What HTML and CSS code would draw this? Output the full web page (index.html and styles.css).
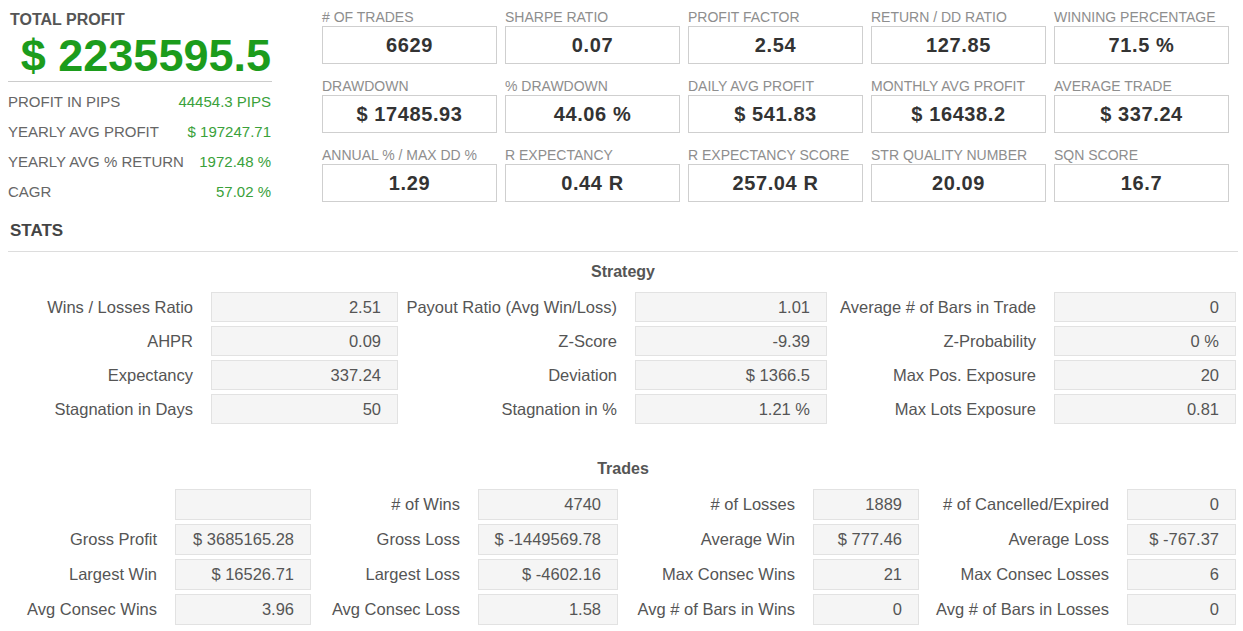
FILE: index.html
```html
<!DOCTYPE html>
<html>
<head>
<meta charset="utf-8">
<link rel="stylesheet" href="styles.css">
</head>
<body>
<div class="page">
  <div class="top">
    <div class="summary">
      <div class="total-title">TOTAL PROFIT</div>
      <div class="total-value">$ 2235595.5</div>
      <div class="sum-rows">
        <div class="sum-row"><span class="sum-label">PROFIT IN PIPS</span><span class="sum-val">44454.3 PIPS</span></div>
        <div class="sum-row"><span class="sum-label">YEARLY AVG PROFIT</span><span class="sum-val">$ 197247.71</span></div>
        <div class="sum-row"><span class="sum-label">YEARLY AVG % RETURN</span><span class="sum-val">1972.48 %</span></div>
        <div class="sum-row"><span class="sum-label">CAGR</span><span class="sum-val">57.02 %</span></div>
      </div>
    </div>
    <div class="metrics">
      <div class="metric"><div class="m-label"># OF TRADES</div><div class="m-box">6629</div></div>
      <div class="metric"><div class="m-label">SHARPE RATIO</div><div class="m-box">0.07</div></div>
      <div class="metric"><div class="m-label">PROFIT FACTOR</div><div class="m-box">2.54</div></div>
      <div class="metric"><div class="m-label">RETURN / DD RATIO</div><div class="m-box">127.85</div></div>
      <div class="metric"><div class="m-label">WINNING PERCENTAGE</div><div class="m-box">71.5 %</div></div>
      <div class="metric"><div class="m-label">DRAWDOWN</div><div class="m-box">$ 17485.93</div></div>
      <div class="metric"><div class="m-label">% DRAWDOWN</div><div class="m-box">44.06 %</div></div>
      <div class="metric"><div class="m-label">DAILY AVG PROFIT</div><div class="m-box">$ 541.83</div></div>
      <div class="metric"><div class="m-label">MONTHLY AVG PROFIT</div><div class="m-box">$ 16438.2</div></div>
      <div class="metric"><div class="m-label">AVERAGE TRADE</div><div class="m-box">$ 337.24</div></div>
      <div class="metric"><div class="m-label">ANNUAL % / MAX DD %</div><div class="m-box">1.29</div></div>
      <div class="metric"><div class="m-label">R EXPECTANCY</div><div class="m-box">0.44 R</div></div>
      <div class="metric"><div class="m-label">R EXPECTANCY SCORE</div><div class="m-box">257.04 R</div></div>
      <div class="metric"><div class="m-label">STR QUALITY NUMBER</div><div class="m-box">20.09</div></div>
      <div class="metric"><div class="m-label">SQN SCORE</div><div class="m-box">16.7</div></div>
    </div>
  </div>

  <div class="stats-title">STATS</div>

  <div class="section-title">Strategy</div>
  <div class="grid strategy">
    <div class="g-label">Wins / Losses Ratio</div><div class="g-box">2.51</div>
    <div class="g-label">Payout Ratio (Avg Win/Loss)</div><div class="g-box">1.01</div>
    <div class="g-label">Average # of Bars in Trade</div><div class="g-box">0</div>
    <div class="g-label">AHPR</div><div class="g-box">0.09</div>
    <div class="g-label">Z-Score</div><div class="g-box">-9.39</div>
    <div class="g-label">Z-Probability</div><div class="g-box">0 %</div>
    <div class="g-label">Expectancy</div><div class="g-box">337.24</div>
    <div class="g-label">Deviation</div><div class="g-box">$ 1366.5</div>
    <div class="g-label">Max Pos. Exposure</div><div class="g-box">20</div>
    <div class="g-label">Stagnation in Days</div><div class="g-box">50</div>
    <div class="g-label">Stagnation in %</div><div class="g-box">1.21 %</div>
    <div class="g-label">Max Lots Exposure</div><div class="g-box">0.81</div>
  </div>

  <div class="section-title trades-title">Trades</div>
  <div class="grid trades">
    <div class="g-label"></div><div class="g-box"></div>
    <div class="g-label"># of Wins</div><div class="g-box">4740</div>
    <div class="g-label"># of Losses</div><div class="g-box">1889</div>
    <div class="g-label"># of Cancelled/Expired</div><div class="g-box">0</div>
    <div class="g-label">Gross Profit</div><div class="g-box">$ 3685165.28</div>
    <div class="g-label">Gross Loss</div><div class="g-box">$ -1449569.78</div>
    <div class="g-label">Average Win</div><div class="g-box">$ 777.46</div>
    <div class="g-label">Average Loss</div><div class="g-box">$ -767.37</div>
    <div class="g-label">Largest Win</div><div class="g-box">$ 16526.71</div>
    <div class="g-label">Largest Loss</div><div class="g-box">$ -4602.16</div>
    <div class="g-label">Max Consec Wins</div><div class="g-box">21</div>
    <div class="g-label">Max Consec Losses</div><div class="g-box">6</div>
    <div class="g-label">Avg Consec Wins</div><div class="g-box">3.96</div>
    <div class="g-label">Avg Consec Loss</div><div class="g-box">1.58</div>
    <div class="g-label">Avg # of Bars in Wins</div><div class="g-box">0</div>
    <div class="g-label">Avg # of Bars in Losses</div><div class="g-box">0</div>
  </div>
</div>
</body>
</html>
```

FILE: styles.css
```css
* { box-sizing: border-box; }
html, body {
  margin: 0;
  padding: 0;
  background: #ffffff;
}
body {
  font-family: "Liberation Sans", Arial, sans-serif;
  color: #555;
}
.page {
  width: 1243px;
  padding: 0 5px 0 8px;
}
.top {
  display: flex;
  align-items: flex-start;
}
.summary {
  width: 264px;
  padding-top: 10px;
}
.total-title {
  font-size: 16px;
  font-weight: bold;
  line-height: 20px;
  color: #555;
  padding-left: 2px;
}
.total-value {
  margin-top: 1px;
  font-size: 45px;
  font-weight: bold;
  line-height: 50px;
  color: #1c9c1c;
  text-align: right;
  padding-right: 1px;
  border-bottom: 1px solid #cccccc;
}
.sum-rows {
  padding-top: 5px;
}
.sum-row {
  display: flex;
  justify-content: space-between;
  font-size: 15px;
  line-height: 30px;
}
.sum-label { color: #666; }
.sum-val { color: #3aa13a; padding-right: 1px; }

.metrics {
  margin-left: 50px;
  padding-top: 8px;
  display: grid;
  grid-template-columns: repeat(5, 175px);
  column-gap: 8px;
  row-gap: 13px;
}
.m-label {
  font-size: 14px;
  line-height: 18px;
  color: #8e8e8e;
  white-space: nowrap;
}
.m-box {
  height: 38px;
  border: 1px solid #cfcfcf;
  background: #fff;
  display: flex;
  align-items: center;
  justify-content: center;
  font-size: 20px;
  font-weight: bold;
  letter-spacing: 0.6px;
  color: #333;
}

.stats-title {
  margin-top: 12px;
  font-size: 17px;
  font-weight: bold;
  line-height: 24px;
  color: #444;
  padding: 0 0 8px 2px;
  border-bottom: 1px solid #dddddd;
  width: 1230px;
}
.section-title {
  margin-top: 10px;
  text-align: center;
  font-size: 16px;
  font-weight: bold;
  line-height: 20px;
  color: #555;
  width: 1230px;
}
.trades-title {
  margin-top: 35px;
}
.grid {
  display: grid;
  margin-top: 10px;
  row-gap: 4px;
  font-size: 16.5px;
}
.strategy {
  grid-template-columns: 203px 187px 237px 192px 227px 182px;
  grid-auto-rows: 30px;
}
.trades {
  grid-template-columns: 167px 136px 167px 140px 195px 106px 208px 109px;
  grid-auto-rows: 31px;
}
.g-label {
  display: flex;
  align-items: center;
  justify-content: flex-end;
  padding-right: 18px;
  color: #555;
  white-space: nowrap;
}
.g-box {
  display: flex;
  align-items: center;
  justify-content: flex-end;
  padding-right: 16px;
  background: #f5f5f5;
  border: 1px solid #e2e2e2;
  color: #555;
  white-space: nowrap;
}
```
